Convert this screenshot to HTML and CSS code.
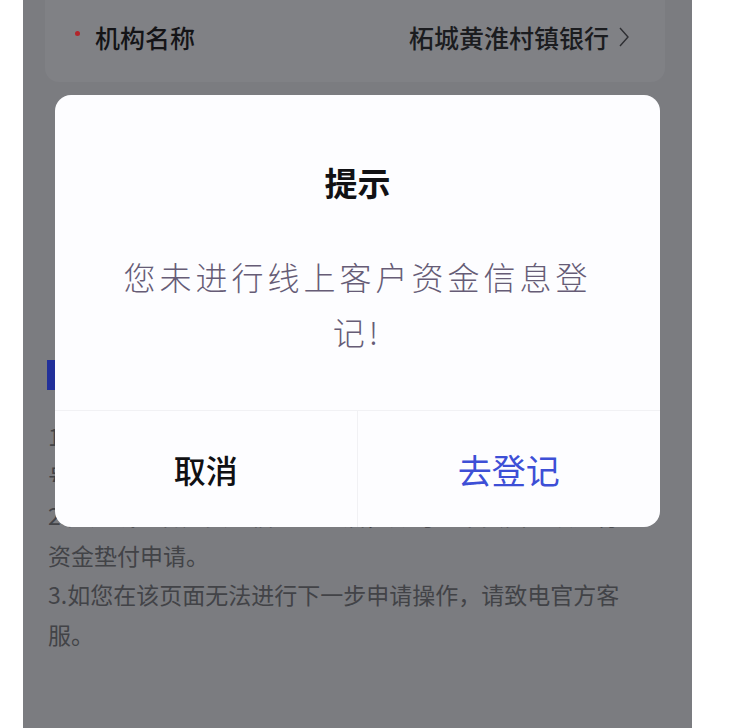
FILE: index.html
```html
<!DOCTYPE html>
<html lang="zh-CN">
<head>
<meta charset="utf-8">
<title>提示</title>
<link rel="stylesheet" href="styles.css">
</head>
<body>
<div class="screen">
  <div class="card">
    <div class="row">
      <span class="label"><span class="req"></span>机构名称</span>
      <span class="value">柘城黄淮村镇银行
        <svg class="chev" width="12" height="22" viewBox="0 0 12 22"><polyline points="2,2 10,11 2,20" fill="none" stroke="#2e2f33" stroke-width="1.4"/></svg>
      </span>
    </div>
  </div>

  <div class="section-head"><span class="bar"></span><span class="sec-title">温馨提示</span></div>

  <div class="notes">
    <p>1.请您如实填写机构名称及个人信息，确保您的身份证件号码真实有效。</p>
    <p>2.完成线上客户资金信息登记后，方可在本页面继续进行资金垫付申请。</p>
    <p>3.如您在该页面无法进行下一步申请操作，请致电官方客服。</p>
  </div>

  <div class="dialog">
    <div class="d-title">提示</div>
    <div class="d-msg">您未进行线上客户资金信息登记!</div>
    <div class="d-actions">
      <div class="btn cancel">取消</div>
      <div class="btn confirm">去登记</div>
    </div>
  </div>
</div>
</body>
</html>
```

FILE: styles.css
```css
* { box-sizing: border-box; }
html, body { margin: 0; padding: 0; background: #ffffff; }
body {
  font-family: "Noto Sans CJK SC", "Noto Sans", sans-serif;
  width: 738px;
  height: 728px;
  overflow: hidden;
}
.screen {
  position: relative;
  margin-left: 23px;
  width: 669px;
  height: 728px;
  background: #7b7c80;
  padding: 0 27px 0 22px;
  overflow: hidden;
}
.card {
  background: #808185;
  border-radius: 0 0 14px 14px;
  height: 82px;
  padding: 18px 35px 0 30px;
}
.row {
  display: flex;
  justify-content: space-between;
  align-items: center;
  height: 38px;
}
.label {
  display: flex;
  align-items: center;
  font-size: 25px;
  font-weight: 500;
  color: #141417;
}
.req {
  width: 5px;
  height: 5px;
  border-radius: 50%;
  background: #b3262b;
  margin-right: 15px;
  margin-top: -8px;
}
.value {
  display: flex;
  align-items: center;
  font-size: 25px;
  font-weight: 500;
  color: #1b1c1f;
}
.chev { margin-left: 9px; }
.section-head {
  margin-top: 278px;
  height: 30px;
  display: flex;
  align-items: center;
}
.bar {
  width: 10px;
  height: 30px;
  background: #22309a;
  margin-left: 2px;
}
.sec-title {
  margin-left: 10px;
  font-size: 22px;
  color: #1d1e21;
}
.notes {
  margin-top: 27px;
  margin-left: 3px;
  width: 590px;
  font-size: 23px;
  line-height: 39.5px;
  color: #424347;
}
.notes p { margin: 0; }
.dialog {
  position: absolute;
  left: 32px;
  top: 95px;
  width: 605px;
  height: 432px;
  background: #fdfdff;
  border-radius: 16px;
  display: flex;
  flex-direction: column;
  align-items: center;
}
.d-title {
  margin-top: 67px;
  font-size: 33px;
  line-height: 40px;
  font-weight: 700;
  color: #111114;
}
.d-msg {
  margin-top: 47px;
  width: 481px;
  text-align: center;
  font-size: 32px;
  line-height: 55px;
  letter-spacing: 4px;
  font-weight: 300;
  color: #665c76;
  height: 122px;
}
.d-actions {
  margin-top: auto;
  width: 100%;
  height: 117px;
  display: grid;
  grid-template-columns: 1fr 1fr;
  border-top: 1px solid #f1f1f4;
}
.btn {
  display: flex;
  align-items: center;
  justify-content: center;
}
.cancel {
  font-size: 32px;
  font-weight: 500;
  color: #101013;
  border-right: 1px solid #f1f1f4;
}
.confirm {
  font-size: 34px;
  color: #3d4fd6;
}
```
